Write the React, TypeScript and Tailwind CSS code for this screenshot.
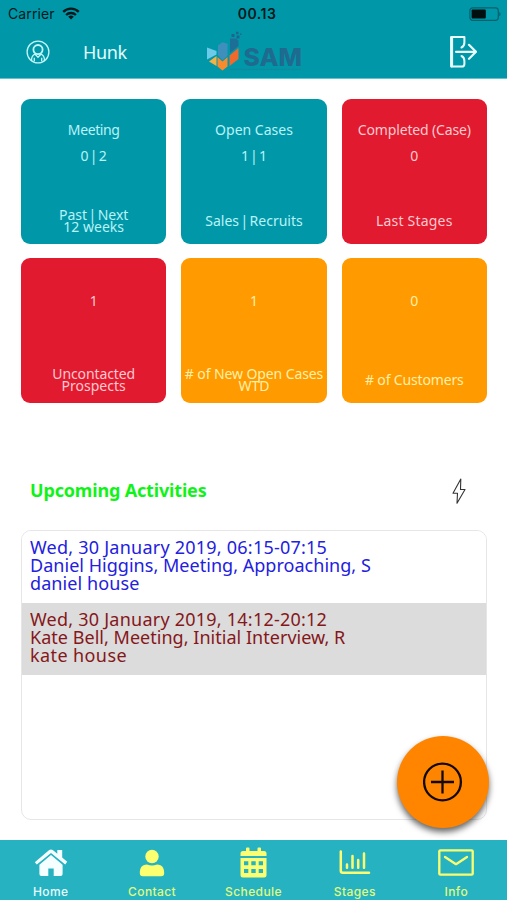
import React from 'react';

// --- Interfaces for Data Structures ---

interface ILine {
  text: string;
  spacing?: string;
}

interface ICard {
  id: string;
  color: string;
  title?: ILine;
  value: string;
  label: ILine[];
}

interface IActivity {
  id: string;
  style: string;
  lines: ILine[];
}

const cards: ICard[] = [
  {
    id: 'meeting',
    color: 'bg-[#0098a9] text-[#b9f2f7]',
    title: { text: 'Meeting', spacing: 'tracking-[-0.4px]' },
    value: '0 | 2',
    label: [
      { text: 'Past | Next', spacing: '[word-spacing:-2.2px]' },
      { text: '12 weeks' },
    ],
  },
  {
    id: 'open',
    color: 'bg-[#0098a9] text-[#b9f2f7]',
    title: { text: 'Open Cases' },
    value: '1 | 1',
    label: [{ text: 'Sales | Recruits', spacing: '[word-spacing:-2.2px]' }],
  },
  {
    id: 'completed',
    color: 'bg-[#e11a30] text-[#ffc9ce]',
    title: { text: 'Completed (Case)', spacing: 'tracking-[-0.15px]' },
    value: '0',
    label: [{ text: 'Last Stages', spacing: 'tracking-[0.2px]' }],
  },
  {
    id: 'uncontacted',
    color: 'bg-[#e11a30] text-[#ffc9ce]',
    value: '1',
    label: [
      { text: 'Uncontacted', spacing: 'tracking-[-0.1px]' },
      { text: 'Prospects' },
    ],
  },
  {
    id: 'new-open',
    color: 'bg-[#ff9a00] text-[#fff0a8]',
    value: '1',
    label: [
      { text: '# of New Open Cases', spacing: 'tracking-[-0.1px]' },
      { text: 'WTD' },
    ],
  },
  {
    id: 'customers',
    color: 'bg-[#ff9a00] text-[#fff0a8]',
    value: '0',
    label: [{ text: '# of Customers', spacing: 'tracking-[-0.15px]' }],
  },
];

const activities: IActivity[] = [
  {
    id: 'daniel',
    style: 'bg-white text-[#2320e0]',
    lines: [
      { text: 'Wed, 30 January 2019, 06:15-07:15', spacing: 'tracking-[0.23px]' },
      { text: 'Daniel Higgins, Meeting, Approaching, S', spacing: 'tracking-[0.03px]' },
      { text: 'daniel house', spacing: 'tracking-[0.1px]' },
    ],
  },
  {
    id: 'kate',
    style: 'bg-[#dcdcdc] text-[#85171a]',
    lines: [
      { text: 'Wed, 30 January 2019, 14:12-20:12', spacing: 'tracking-[0.23px]' },
      { text: 'Kate Bell, Meeting, Initial Interview, R', spacing: 'tracking-[0.03px]' },
      { text: 'kate house', spacing: 'tracking-[0.4px]' },
    ],
  },
];

// --- Icons ---

const WifiIcon = () => (
  <svg className="w-[18px] h-[13px]" viewBox="0 0 18 13" fill="none" stroke="#04191c" strokeWidth="2.3">
    <path d="M1.2 4.9a11 11 0 0 1 15.6 0" />
    <path d="M4.1 8a7 7 0 0 1 9.8 0" />
    <path d="M9 12.6 6.2 9.8a4 4 0 0 1 5.6 0z" fill="#04191c" stroke="none" />
  </svg>
);

const BatteryIcon = () => (
  <svg className="w-[32px] h-[14px]" viewBox="0 0 32 14" fill="none">
    <rect x="0.9" y="0.9" width="28.4" height="12.4" rx="2.8" stroke="#04606b" strokeWidth="1.2" />
    <rect x="2.6" y="2.6" width="14.2" height="9" rx="1" fill="#020f11" />
    <path d="M30.4 4.9c1.5.5 1.5 3.9 0 4.4z" fill="#04606b" />
  </svg>
);

const UserIcon = () => (
  <svg className="w-6 h-6" viewBox="0 0 24 24" fill="none" stroke="#c4f5f9" strokeWidth="1.3">
    <circle cx="12" cy="12" r="10.9" />
    <circle cx="12" cy="9.6" r="4.6" strokeWidth="1.8" />
    <path d="M5.5 20.5c0-3.6 1.2-5.5 3.6-6.3L12 17.3l2.9-3.1c2.4.8 3.6 2.7 3.6 6.3M8.3 17.8v3.8M15.7 17.8v3.8" />
  </svg>
);

const Logo = () => (
  <svg className="w-[97px] h-[42px]" viewBox="0 0 97 42">
    <path d="M1 16.500l9.500 3.500v3.500L1 28.500z" fill="#6ccbe8" />
    <path d="M12 14.500l4.500-3.200 5 1.500v12l-5 4.500-4.500-5z" fill="#3f8fbd" />
    <path d="M3 30.500l7.500-5.500v10z" fill="#f3b246" />
    <path d="M11.500 26l5 4.500 5-4.500v9.500l-5 4-5-4z" fill="#f78b2d" />
    <path d="M23.500 24.500l9-7.500v11l-9 7z" fill="#f2692b" />
    <path d="M24 7.500h6l2.500 2v5.500l-8.500 7z" fill="#1d6f98" />
    <path d="M25.500 3h3v3h-3zM30 .8h2.500v2.500H30zM30.500 4.500h3v3h-3zM34 2.500h1.500V4H34z" fill="#1c668e" />
    <text x="37.5" y="34.5" textLength="58.5" lengthAdjust="spacingAndGlyphs" fontFamily="Inter, sans-serif" fontWeight="800" fontSize="25" fill="#1f6b90">SAM</text>
    <path d="M24 38.500h71" stroke="#1b7f9b" strokeWidth="1.6" strokeDasharray="3 .6" opacity=".6" />
  </svg>
);

const LogoutIcon = () => (
  <svg className="w-[28px] h-[34px]" viewBox="0 0 28 34" fill="none" stroke="#e9ffff" strokeWidth="2" strokeLinecap="round" strokeLinejoin="round">
    <path d="M12.5 12.5c2-1 2.9-2.5 2.9-5V2H2.3v29.5h10.5q2.6 0 2.6-2.600V26c0-2.500-.9-4-2.900-5" />
    <path d="M2.7 2.5v28.5" strokeWidth="2.8" />
    <path d="M7 16.8h19.5M20 9.8l7 7-7 7" strokeWidth="2.2" />
  </svg>
);

const BoltIcon = () => (
  <svg className="w-4 h-7" viewBox="0 0 16 28" fill="none" stroke="#333333" strokeWidth="1.1" strokeLinejoin="round">
    <path d="M9.800 2 2 16.300h4.500L6 26.300 14 12.500H9.500z" />
  </svg>
);

const PlusIcon = () => (
  <svg className="w-10 h-10" viewBox="0 0 40 40" fill="none" stroke="#120a02" strokeWidth="2.3">
    <circle cx="19.5" cy="20" r="18.4" />
    <path d="M19.5 8.5v23M8 20h23" />
  </svg>
);

const HomeIcon = () => (
  <svg className="w-[34px] h-[29px]" viewBox="0 0 34 29" fill="#f5ffff">
    <path d="M.8 14.300 15.200 2.100q1.800-1.400 3.600 0l4.500 3.700V2h4.900v7.500l5 4.200-2 2.700L17 4.900 2.800 16.600z" />
    <path d="M17 7 28.600 16.800V26q0 2-2 2h-6.900v-7.500h-5.400V28H7.400q-2 0-2-2v-9.200z" />
  </svg>
);

const ContactIcon = () => (
  <svg className="w-[26px] h-[28px]" viewBox="0 0 26 28" fill="#fbff70">
    <circle cx="13" cy="7.5" r="6.7" />
    <path d="M.8 24c0-5.800 2.800-8.500 7.200-8.500 3 1.300 7 1.300 10 0 4.400 0 7.200 2.700 7.200 8.500 0 2.200-1 3.300-3 3.300H3.800c-2 0-3-1.100-3-3.300z" />
  </svg>
);

const ScheduleIcon = () => (
  <svg className="w-[27px] h-[31px]" viewBox="0 0 27 31" fill="#fbff70">
    <path d="M.5 9V6.500Q.5 4 3 4h3V1.500Q6 .5 7 .5h1.500q1 0 1 1V4h8V1.500q0-1 1-1H20q1 0 1 1V4h3q2.500 0 2.500 2.500V9z" />
    <path
      fillRule="evenodd"
      d="M.5 11h26v17q0 2.500-2.500 2.500H3Q.5 30.500.5 28zM4 14.300v4h4.300v-4zm7.300 0v4h4.400v-4zm7.400 0v4H23v-4zM4 22v4h4.300v-4zm7.300 0v4h4.400v-4zm7.400 0v4H23v-4z"
    />
  </svg>
);

const StagesIcon = () => (
  <svg className="w-[32px] h-[25px]" viewBox="0 0 32 25" fill="none" stroke="#fbff70" strokeWidth="2.5" strokeLinecap="round">
    <path d="M1.800 1.500v19.200q0 2 2 2H30" />
    <path d="M8 14.500v3.300M13.500 6v11.800M19.200 10v7.800M25 3.500v14.300" />
  </svg>
);

const InfoIcon = () => (
  <svg className="w-[36px] h-[27px]" viewBox="0 0 36 27" fill="none" stroke="#fbff70" strokeWidth="2.3" strokeLinejoin="round" strokeLinecap="round">
    <rect x="1.3" y="1.3" width="33.4" height="24.4" rx="1" />
    <path d="M7 8l11 7.200L29 8" />
  </svg>
);

const tabs = [
  { name: 'Home', icon: <HomeIcon />, style: 'text-[#e4fdff]' },
  { name: 'Contact', icon: <ContactIcon />, style: 'text-[#e0fa80]' },
  { name: 'Schedule', icon: <ScheduleIcon />, style: 'text-[#e0fa80]' },
  { name: 'Stages', icon: <StagesIcon />, style: 'text-[#e0fa80]' },
  { name: 'Info', icon: <InfoIcon />, style: 'text-[#e0fa80]' },
];

const StatCard = ({ card }: { card: ICard }) => (
  <div className={`h-[145px] rounded-[9px] flex flex-col items-center text-[14px] leading-5 whitespace-nowrap ${card.color}`}>
    <div className={`flex flex-col items-center ${card.title ? 'pt-[21px] gap-[6px]' : 'pt-[33px]'}`}>
      {card.title && <span className={card.title.spacing}>{card.title.text}</span>}
      <span className="[word-spacing:-2.4px]">{card.value}</span>
    </div>
    <div className="mt-auto mb-[10px] h-[26px] flex flex-col items-center justify-center leading-[12.5px]">
      {card.label.map((line) => (
        <span key={line.text} className={line.spacing}>{line.text}</span>
      ))}
    </div>
  </div>
);

export default function App() {
  return (
    <div className="relative w-[507px] h-[900px] flex flex-col bg-white overflow-hidden font-['Noto_Sans',sans-serif]">
      <header className="h-[79px] shrink-0 bg-[#0098a9] border-b border-[#5fc4cf]">
        {/* Status bar */}
        <div className="h-[27px] pl-2 pr-[6px] grid grid-cols-3 items-center font-['Inter',sans-serif] text-[14px] text-[#04191c]">
          <div className="flex items-center gap-[7px]">
            <span className="tracking-[0.1px]">Carrier</span>
            <WifiIcon />
          </div>
          <span className="pl-[5px] text-center font-semibold tracking-[0.5px]">00.13</span>
          <div className="flex justify-end">
            <BatteryIcon />
          </div>
        </div>
        <div className="h-[50px] flex items-center pl-[26px] pr-[30px]">
          <UserIcon />
          <span className="ml-[33px] w-[91px] text-[18px] tracking-[-0.4px] text-[#e4fdff]">Hunk</span>
          <div className="ml-[32px]">
            <Logo />
          </div>
          <div className="ml-auto">
            <LogoutIcon />
          </div>
        </div>
      </header>

      <main className="flex-1 flex flex-col pl-[21px] pr-[20px] pt-[20.4px]">
        <div className="grid grid-cols-3 gap-x-[15px] gap-y-[14px]">
          {cards.map((card) => (
            <StatCard key={card.id} card={card} />
          ))}
        </div>

        <div className="mt-[73.6px] h-[28px] pl-[9px] pr-[20px] flex items-center justify-between">
          <h2 className="text-[18px] font-bold tracking-[-0.17px] text-[#10f318]">Upcoming Activities</h2>
          <BoltIcon />
        </div>

        <div className="mt-[25px] h-[290px] rounded-[10px] border border-[#e6e6e6] overflow-hidden">
          {activities.map((activity) => (
            <div key={activity.id} className={`h-[72px] pl-2 pt-[8px] flex flex-col items-start text-[18px] leading-[17.8px] whitespace-nowrap ${activity.style}`}>
              {activity.lines.map((line) => (
                <span key={line.text} className={line.spacing}>{line.text}</span>
              ))}
            </div>
          ))}
        </div>
      </main>

      <nav className="h-[60px] shrink-0 bg-[#26b2c1] grid grid-cols-5 font-['Inter',sans-serif]">
        {tabs.map((tab) => (
          <div key={tab.name} className={`flex flex-col items-center ${tab.style}`}>
            <div className="h-[44px] pt-px flex items-center">{tab.icon}</div>
            <span className="text-[12px] leading-4 font-medium tracking-[0.4px]">{tab.name}</span>
          </div>
        ))}
      </nav>

      {/* Floating add button */}
      <button className="absolute left-[397px] top-[736px] w-[92px] h-[92px] rounded-full bg-[#ff8500] flex items-center justify-center shadow-[0_4px_6px_rgba(0,0,0,0.6)]">
        <PlusIcon />
      </button>
    </div>
  );
}
